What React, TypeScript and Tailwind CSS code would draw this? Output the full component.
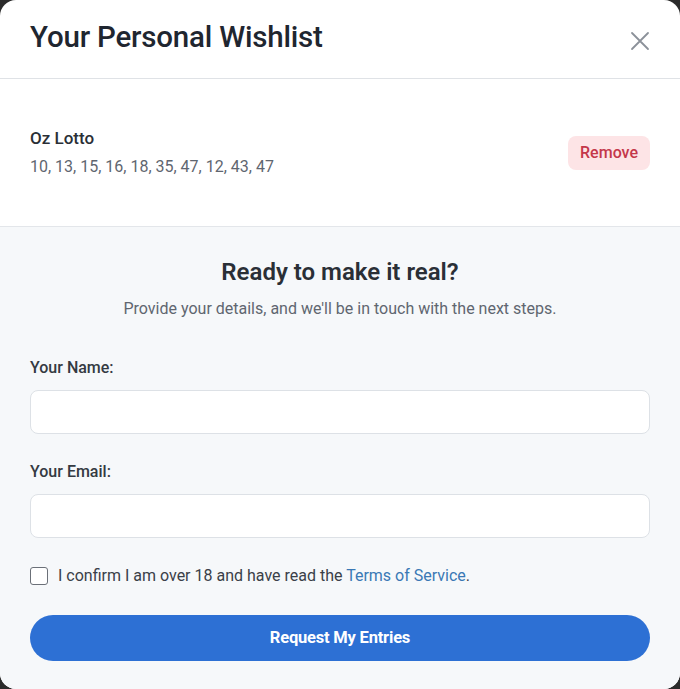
import React, { useState } from 'react';

export default function App() {
  const [agree, setAgree] = useState(false);

  return (
    <div className="h-[689px] overflow-hidden bg-[#2b2b2b]" style={{ fontFamily: 'Roboto, "Liberation Sans", sans-serif' }}>
      <div className="w-[680px] h-[689px] bg-white rounded-2xl overflow-hidden flex flex-col">
        {/* header */}
        <div className="h-[79px] flex items-center justify-between pl-[30px] pr-[30px] border-b border-[#dfe2e6]">
          <h2 className="text-[29.5px] font-medium text-[#1f2630] tracking-[-0.2px] -mt-[4px]">Your Personal Wishlist</h2>
          <button className="w-[20px] h-[20px] text-[#8b9199] mt-[3px]" aria-label="Close">
            <svg viewBox="0 0 20 20" className="w-[20px] h-[20px]" fill="none" stroke="currentColor" strokeWidth="1.8" strokeLinecap="round">
              <path d="M2 2 L18 18 M18 2 L2 18" />
            </svg>
          </button>
        </div>

        {/* wishlist item */}
        <div className="h-[148px] flex items-center justify-between pl-[30px] pr-[30px] border-b border-[#e3e6ea]">
          <div>
            <p className="text-[17px] font-medium text-[#2a2f36] leading-[22px]">Oz Lotto</p>
            <p className="text-[16px] text-[#5f6670] leading-[22px] mt-[7px]">10, 13, 15, 16, 18, 35, 47, 12, 43, 47</p>
          </div>
          <button className="h-[34px] px-[12px] rounded-lg bg-[#fde4e6] text-[#c4374a] text-[16px] font-medium">
            Remove
          </button>
        </div>

        {/* form */}
        <div className="flex-1 bg-[#f6f8fa] px-[30px] pt-[30px]">
          <h3 className="text-center text-[24px] font-semibold text-[#2a2f36] leading-[30px]">Ready to make it real?</h3>
          <p className="text-center text-[16px] text-[#5f6670] mt-[11px] leading-[22px]">
            Provide your details, and we'll be in touch with the next steps.
          </p>

          <label className="block mt-[37px] text-[16px] font-medium text-[#343a42] leading-[22px]">Your Name:</label>
          <input type="text" className="block w-full h-[44px] mt-[11px] bg-white border border-[#dde1e6] rounded-lg outline-none px-3" />

          <label className="block mt-[27px] text-[16px] font-medium text-[#343a42] leading-[22px]">Your Email:</label>
          <input type="email" className="block w-full h-[44px] mt-[11px] bg-white border border-[#dde1e6] rounded-lg outline-none px-3" />

          <div className="flex items-center h-[22px] mt-[27px]">
            <button
              onClick={() => setAgree(!agree)}
              className={`w-[18px] h-[18px] rounded-[3px] border-[1.5px] ${agree ? 'bg-[#2d70d4] border-[#2d70d4]' : 'bg-white border-[#6b7078]'}`}
              aria-label="confirm"
            />
            <span className="ml-[10px] text-[16px] text-[#3a4048] leading-[22px]">
              I confirm I am over 18 and have read the <span className="text-[#3a78b5]">Terms of Service</span>.
            </span>
          </div>

          <button className="w-full h-[46px] mt-[28px] rounded-full bg-[#2d70d4] text-white text-[16.5px] font-bold tracking-[-0.2px]">
            Request My Entries
          </button>
        </div>
      </div>
    </div>
  );
}
